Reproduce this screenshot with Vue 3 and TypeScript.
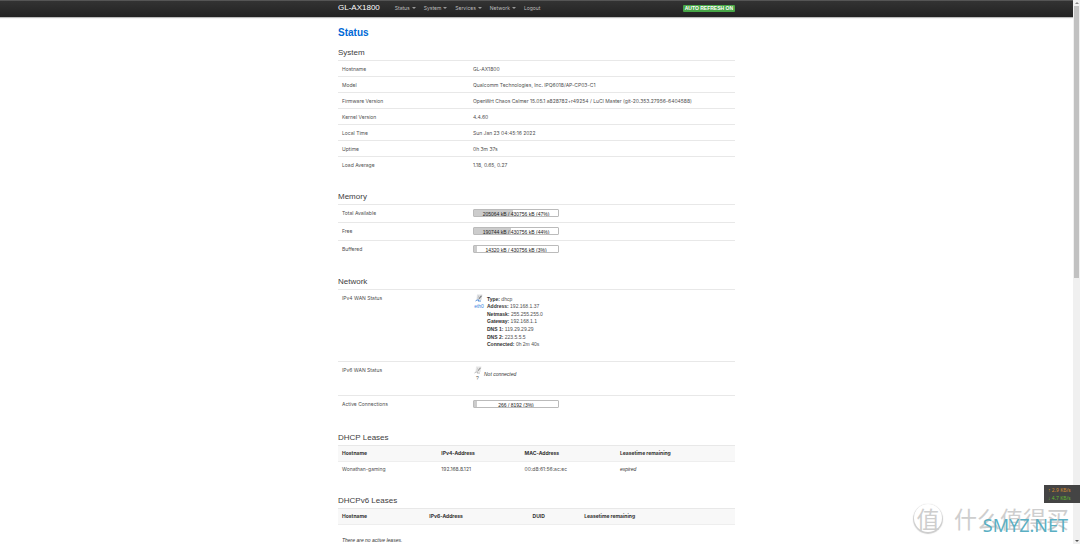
<script setup lang="ts">
interface Row { label: string; value: string }
interface Meter { label: string; text: string; percent: number }

const menus: string[] = ['Status', 'System', 'Services', 'Network']

const system: Row[] = [
  { label: 'Hostname', value: 'GL-AX1800' },
  { label: 'Model', value: 'Qualcomm Technologies, Inc. IPQ6018/AP-CP03-C1' },
  { label: 'Firmware Version', value: 'OpenWrt Chaos Calmer 15.05.1 a828782+r49254 / LuCI Master (git-20.353.27956-6404588)' },
  { label: 'Kernel Version', value: '4.4.60' },
  { label: 'Local Time', value: 'Sun Jan 23 04:45:16 2022' },
  { label: 'Uptime', value: '0h 3m 37s' },
  { label: 'Load Average', value: '1.18, 0.65, 0.27' },
]

const memory: Meter[] = [
  { label: 'Total Available', text: '205064 kB / 430756 kB (47%)', percent: 47 },
  { label: 'Free', text: '190744 kB / 430756 kB (44%)', percent: 44 },
  { label: 'Buffered', text: '14320 kB / 430756 kB (3%)', percent: 3 },
]

const wan: Row[] = [
  { label: 'Type', value: 'dhcp' },
  { label: 'Address', value: '192.168.1.37' },
  { label: 'Netmask', value: '255.255.255.0' },
  { label: 'Gateway', value: '192.168.1.1' },
  { label: 'DNS 1', value: '119.29.29.29' },
  { label: 'DNS 2', value: '223.5.5.5' },
  { label: 'Connected', value: '0h 2m 40s' },
]
</script>

<template>
  <div class="page">
    <div class="view">
      <header class="navbar">
        <nav class="container bar">
          <a class="brand" href="#">GL-AX1800</a>
          <a v-for="m in menus" :key="m" class="menu" href="#">{{ m }}<span class="caret"></span></a>
          <a class="menu" href="#">Logout</a>
          <button class="refresh" type="button">AUTO REFRESH ON</button>
        </nav>
      </header>

      <main class="container content">
        <h1>Status</h1>

        <section>
          <h2>System</h2>
          <table class="info">
            <tbody>
              <tr v-for="r in system" :key="r.label">
                <th scope="row">{{ r.label }}</th>
                <td>{{ r.value }}</td>
              </tr>
            </tbody>
          </table>
        </section>

        <section>
          <h2>Memory</h2>
          <table class="info meters">
            <tbody>
              <tr v-for="r in memory" :key="r.label">
                <th scope="row">{{ r.label }}</th>
                <td>
                  <div class="meter">
                    <div class="fill" :style="{ width: r.percent + '%' }"></div>
                    <span>{{ r.text }}</span>
                  </div>
                </td>
              </tr>
            </tbody>
          </table>
        </section>

        <section>
          <h2>Network</h2>
          <table class="info network">
            <tbody>
              <tr class="wan4">
                <th scope="row">IPv4 WAN Status</th>
                <td>
                  <div class="wan">
                    <div class="iface">
                      <svg class="port" viewBox="0 0 16 16" aria-hidden="true">
                        <path d="M4 1h11l-2 11H3z" fill="#dfe1e4" />
                        <path d="M7 9l5-6 2 1-5 6z" fill="#777" />
                        <path d="M6 5l2-1M5 8l2-1" stroke="#999" />
                        <path d="M1 14l3-2h4l-2 2h6" fill="none" stroke="#5b92d8" stroke-width="2" />
                      </svg>
                      <a href="#">eth0</a>
                    </div>
                    <ul>
                      <li v-for="d in wan" :key="d.label"><b>{{ d.label }}:</b> {{ d.value }}</li>
                    </ul>
                  </div>
                </td>
              </tr>
              <tr class="wan6">
                <th scope="row">IPv6 WAN Status</th>
                <td>
                  <div class="wan down">
                    <div class="iface">
                      <svg class="port" viewBox="0 0 16 16" aria-hidden="true">
                        <path d="M4 1h11l-2 11H3z" fill="#e8e8e8" />
                        <path d="M7 9l5-6 2 1-5 6z" fill="#999" />
                        <path d="M6 5l2-1M5 8l2-1" stroke="#aaa" />
                        <path d="M1 14l3-2h4l-2 2h6" fill="none" stroke="#bbb" stroke-width="2" />
                      </svg>
                      <span>?</span>
                    </div>
                    <em>Not connected</em>
                  </div>
                </td>
              </tr>
              <tr>
                <th scope="row">Active Connections</th>
                <td>
                  <div class="meter">
                    <div class="fill" :style="{ width: '3%' }"></div>
                    <span>266 / 8192 (3%)</span>
                  </div>
                </td>
              </tr>
            </tbody>
          </table>
        </section>

        <section>
          <h2>DHCP Leases</h2>
          <table class="leases v4">
            <thead>
              <tr><th>Hostname</th><th>IPv4-Address</th><th>MAC-Address</th><th>Leasetime remaining</th></tr>
            </thead>
            <tbody>
              <tr><td>Wonathan-gaming</td><td>192.168.8.121</td><td>00:d8:61:56:ac:ec</td><td><em>expired</em></td></tr>
            </tbody>
          </table>
        </section>

        <section>
          <h2>DHCPv6 Leases</h2>
          <table class="leases v6">
            <thead>
              <tr><th>Hostname</th><th>IPv6-Address</th><th>DUID</th><th>Leasetime remaining</th></tr>
            </thead>
            <tbody>
              <tr><td colspan="4" class="empty"><em>There are no active leases.</em></td></tr>
            </tbody>
          </table>
        </section>
      </main>
    </div>

    <div class="scroll">
      <div class="arrow up"></div>
      <div class="thumb"></div>
      <div class="arrow down-arrow"></div>
    </div>

    <div class="stamp">
      <span class="seal">值</span>
      <span class="zh">什么值得买</span>
    </div>
    <div class="site">SMYZ.NET</div>
    <div class="speed">
      <div class="upload">↑ 2.9 KB/s</div>
      <div class="download">↓ 4.7 KB/s</div>
    </div>
  </div>
</template>

<style>
html, body { overflow: hidden; }
</style>

<style scoped>
.page {
  position: relative;
  display: flex;
  height: 100vh;
  overflow: hidden;
  background: #fff;
  color: #505050;
  font-family: Inter, "Liberation Sans", Arial, sans-serif;
  font-size: 5px;
  line-height: 8px;
}
.view { flex: 1; min-width: 0; overflow: hidden; }
.container { max-width: 397px; margin: 0 auto; }
a { text-decoration: none; }
em { font-family: "Liberation Sans", Arial, sans-serif; color: #333; }

.navbar {
  padding-bottom: 2px;
  background: linear-gradient(#333, #222);
  border-top: 1px solid #555;
  box-shadow: 0 1px 1px #0004;
}
.bar { display: flex; align-items: center; height: 14px; gap: 8px; }
.brand {
  color: #fff;
  font: 8px/14px "Liberation Sans", Arial, sans-serif;
  margin-right: 7px;
}
.menu { display: flex; align-items: center; gap: 2px; color: #bfbfbf; line-height: 14px; }
.caret { border: 2px solid transparent; border-top-color: #999; border-bottom: 0; }
.refresh {
  margin-left: auto;
  border: 0;
  border-radius: 1px;
  padding: 0 2px;
  background: #46a546;
  color: #fff;
  font: bold 5px/7px "Liberation Sans", Arial, sans-serif;
}

.content { padding-top: 8px; }
h1 {
  margin: 0;
  color: #0069d6;
  font: bold 10px/16px "Liberation Sans", Arial, sans-serif;
}
h2 {
  margin: 0;
  color: #404040;
  font: 8px/15px "Liberation Sans", Arial, sans-serif;
}
section { padding-top: 4px; }
section + section { padding-top: 16px; }
table { width: 100%; border-collapse: collapse; table-layout: fixed; }
tr { height: 16px; }
th, td {
  box-sizing: border-box;
  padding: 4px 4px 3px;
  border-top: 1px solid #e8e8e8;
  text-align: left;
  vertical-align: top;
  font-weight: normal;
}
.info th { width: 33%; }
.meters td, .meters th { padding-bottom: 5px; }

.meter {
  position: relative;
  width: 84px;
  height: 6px;
  border: 1px solid #bbb;
  border-radius: 1px;
  overflow: hidden;
  background: #fff;
}
.fill { height: 100%; background: #ccc; }
.meter span {
  position: absolute;
  inset: 0;
  text-align: center;
  color: #222;
  font: 5px/8px "Liberation Sans", Arial, sans-serif;
}

.wan { display: flex; font-family: "Liberation Sans", Arial, sans-serif; }
.wan4 { height: 72px; }
.wan6 { height: 34px; }
.network tr:last-child td { padding-bottom: 6px; }
.iface { display: flex; flex-direction: column; align-items: center; width: 12px; }
.iface a { color: #3b86e0; }
.port { width: 8px; height: 8px; }
ul {
  display: flex;
  flex-direction: column;
  justify-content: space-between;
  height: 53px;
  margin: 2px 0 0 2px;
  padding: 0;
  list-style: none;
}
li { line-height: 7px; }
b { color: #333; }
.down { gap: 2px; align-items: center; }
.down .iface { width: 9px; }

.leases thead th {
  padding: 3px 4px 4px;
  background: #f8f8f8;
  color: #333;
  font: bold 5px/8px Inter, "Liberation Sans", Arial, sans-serif;
}
.leases tbody td { padding-top: 3px; border-top-color: #eee; }
.v4 th:nth-child(1) { width: 25%; }
.v4 th:nth-child(2) { width: 21%; }
.v4 th:nth-child(3) { width: 24%; }
.v6 th:nth-child(1) { width: 22%; }
.v6 th:nth-child(2) { width: 26%; }
.v6 th:nth-child(3) { width: 13%; }
.leases tbody .empty { padding-top: 11px; }

.scroll {
  display: flex;
  flex-direction: column;
  width: 7px;
  background: #f0f0f0;
}
.thumb { height: 50%; margin: 0 1px; background: #c1c1c1; }
.arrow {
  width: 0;
  margin: 2px auto;
  border: 2px solid transparent;
}
.up { border-top: 0; border-bottom-color: #888; }
.down-arrow { margin-top: auto; border-bottom: 0; border-top-color: #555; }

.stamp {
  position: absolute;
  right: 11px;
  bottom: 10px;
  display: flex;
  align-items: center;
  gap: 12px;
  color: #cecece;
  font-family: "Noto Sans CJK SC", sans-serif;
}
.seal {
  width: 28px;
  border-radius: 50%;
  box-shadow: 0 1px 1px 1px #ccc;
  font-size: 23px;
  line-height: 28px;
  text-align: center;
}
.zh { font-size: 23px; line-height: 32px; }
.site {
  position: absolute;
  right: 12px;
  bottom: 7px;
  color: #5aafc3;
  font: 18px/24px "Noto Sans", sans-serif;
}
.speed {
  position: absolute;
  right: 0;
  bottom: 41px;
  width: 36px;
  box-sizing: border-box;
  padding: 1px 0 1px 4px;
  background: #444;
  font: 5px/8px "Noto Sans", sans-serif;
}
.upload { color: #d08a30; }
.download { color: #62b832; }
</style>
